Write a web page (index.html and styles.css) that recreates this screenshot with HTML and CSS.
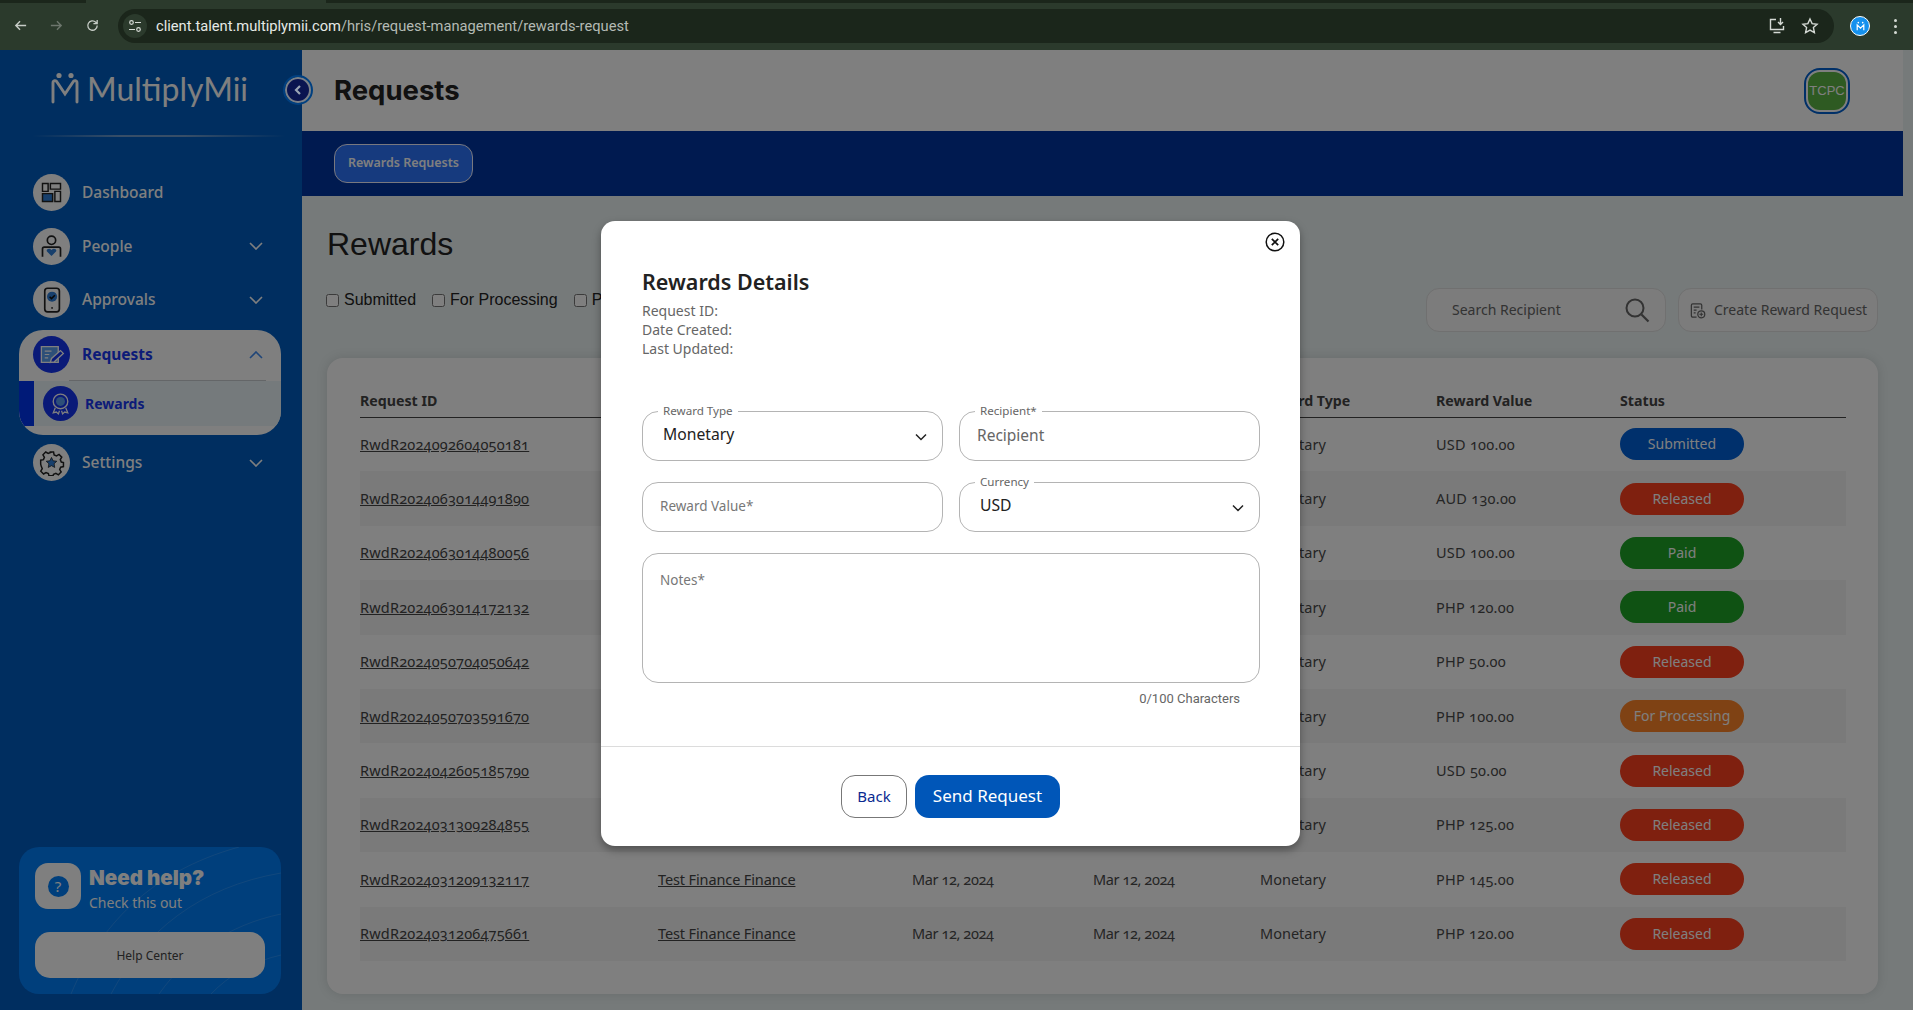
FILE: index.html
```html
<!DOCTYPE html>
<html lang="en">
<head>
<meta charset="utf-8">
<title>Rewards Requests</title>
<link rel="stylesheet" href="styles.css">
</head>
<body>
<div class="browser">
  <div class="tabstrip"><span class="tab-dark tab-a"></span><span class="tab-light"></span><span class="tab-dark tab-b"></span></div>
  <div class="toolbar">
    <svg class="tb-icon" viewBox="0 0 16 16"><path d="M14 8H3M7.500 3.500 3 8l4.500 4.500" fill="none" stroke="#c6ccc6" stroke-width="1.500"/></svg>
    <svg class="tb-icon tb-fwd" viewBox="0 0 16 16"><path d="M2 8h11M8.500 3.500 13 8l-4.500 4.500" fill="none" stroke="#6d766d" stroke-width="1.500"/></svg>
    <svg class="tb-icon tb-reload" viewBox="0 0 16 16"><path d="M13 8a5 5 0 1 1-1.500-3.500L13 6M13 2v4H9" fill="none" stroke="#c6ccc6" stroke-width="1.400"/></svg>
    <div class="omnibox">
      <span class="tune"><svg viewBox="0 0 16 16" width="16" height="16"><circle cx="4.500" cy="4.500" r="1.800" fill="none" stroke="#d5dad5" stroke-width="1.200"/><path d="M8 4.500h6M2 11.500h6" stroke="#d5dad5" stroke-width="1.200"/><circle cx="11.500" cy="11.500" r="1.800" fill="none" stroke="#d5dad5" stroke-width="1.200"/></svg></span>
      <span class="url"><span class="url-host">client.talent.multiplymii.com</span>/hris/request-management/rewards-request</span>
      <svg class="om-install" viewBox="0 0 18 18"><path d="M8 2.500H2.500v10h13V9M5.500 15.500h7" fill="none" stroke="#d5dad5" stroke-width="1.400"/><path d="M12.500 1v6M10 5l2.500 2.500L15 5" fill="none" stroke="#d5dad5" stroke-width="1.400"/></svg>
      <svg class="om-star" viewBox="0 0 18 18"><path d="m9 2 2.100 4.600 5 .6-3.700 3.400 1 5L9 13.100 4.600 15.600l1-5L1.900 7.200l5-.6z" fill="none" stroke="#d5dad5" stroke-width="1.400"/></svg>
    </div>
    <span class="profile"><svg viewBox="0 0 20 20" width="11" height="11"><path d="M4 17V7l6 6 6-6v10" fill="none" stroke="#fff" stroke-width="2.200"/><circle cx="6" cy="3" r="1.500" fill="#fff"/><circle cx="14" cy="3" r="1.500" fill="#fff"/></svg></span>
    <span class="kebab"><i></i><i></i><i></i></span>
  </div>
</div>

<div class="app">
  <aside class="sidebar">
    <div class="logo">
      <svg class="logo-mark" viewBox="0 0 28 36"><circle cx="8" cy="3.500" r="2.600" fill="#fff"/><circle cx="20" cy="3.500" r="2.600" fill="#fff"/><path d="M2 30V11c0-3 3-3 4-1l8 12 8-12c1-2 4-2 4 1v19" fill="none" stroke="#fff" stroke-width="2.900" stroke-linecap="round"/></svg>
      <span class="logo-text">MultiplyMii</span>
    </div>
    <div class="logo-rule"></div>

    <nav class="nav">
      <a class="nav-item">
        <span class="nav-ico"><svg viewBox="0 0 24 24"><path d="M4 4h5v7H4zM11 4h9v5h-9zM15 11h5v9h-5z" fill="none" stroke="#222" stroke-width="1.300"/><path d="M4 13h9v7H4z" fill="#2f7fd8" stroke="#222" stroke-width="1.300"/></svg></span>
        <span class="nav-label">Dashboard</span>
      </a>
      <a class="nav-item">
        <span class="nav-ico"><svg viewBox="0 0 24 24"><circle cx="12" cy="6.500" r="3.700" fill="none" stroke="#222" stroke-width="1.500"/><path d="M4 21v-7c0-1 .6-1.500 1.500-1.500h13c.9 0 1.500.5 1.500 1.500v7" fill="none" stroke="#222" stroke-width="1.500"/><path d="M12 20.500 8 16.500c-1.300-1.700 1.800-3.700 4-1.500 2.200-2.200 5.300-.2 4 1.500z" fill="#2f7fd8"/></svg></span>
        <span class="nav-label">People</span>
        <svg class="chev" viewBox="0 0 14 8"><path d="m1 1 6 6 6-6" fill="none" stroke="#fff" stroke-width="1.600"/></svg>
      </a>
      <a class="nav-item">
        <span class="nav-ico"><svg viewBox="0 0 24 24"><rect x="6" y="2" width="13" height="21" rx="2.500" fill="none" stroke="#222" stroke-width="1.500"/><circle cx="12.500" cy="9.500" r="4.500" fill="#2f7fd8"/><path d="m10.300 9.500 1.700 1.700 3-3" fill="none" stroke="#111" stroke-width="1.400"/><circle cx="12.500" cy="19.500" r=".8" fill="#222"/></svg></span>
        <span class="nav-label">Approvals</span>
        <svg class="chev" viewBox="0 0 14 8"><path d="m1 1 6 6 6-6" fill="none" stroke="#fff" stroke-width="1.600"/></svg>
      </a>
      <div class="nav-group">
        <a class="nav-item nav-item-active">
          <span class="nav-ico nav-ico-active"><svg viewBox="0 0 24 24"><path d="M3 5h15v14H3z" fill="#5a9ff0" stroke="#fff" stroke-width="1.200"/><path d="M6 9h6M6 12h4M6 15h3" stroke="#fff" stroke-width="1.100"/><path d="m11 19 1-3.500 8-7 2.500 2.500-8 7.500z" fill="#1434f0" stroke="#fff" stroke-width="1.200"/></svg></span>
          <span class="nav-label">Requests</span>
          <svg class="chev" viewBox="0 0 14 8"><path d="m1 7 6-6 6 6" fill="none" stroke="#3f8af0" stroke-width="1.600"/></svg>
        </a>
        <a class="nav-sub">
          <span class="nav-sub-ico"><svg viewBox="0 0 24 24"><circle cx="12" cy="10" r="7" fill="none" stroke="#fff" stroke-width="1.300"/><circle cx="12" cy="10" r="4.300" fill="#5a9ff0"/><path d="m7 16-2 5 3-.8 2 1.800 1-3M17 16l2 5-3-.8-2 1.800-1-3" fill="none" stroke="#fff" stroke-width="1.200"/></svg></span>
          <span class="nav-sub-label">Rewards</span>
        </a>
      </div>
      <a class="nav-item">
        <span class="nav-ico"><svg viewBox="0 0 24 24"><path d="m10 2h4l.6 2.800 2.400 1 2.500-1.500 2.800 2.800-1.500 2.500 1 2.400 2.200.6v4l-2.800.6-1 2.400 1.500 2.500-2.800 2.800-2.500-1.500-2.400 1-.6 1.600h-4l-.6-2.400-2.400-1-2.500 1.500-2.800-2.800 1.500-2.500-1-2.400L1 14.200v-4l2.800-.6 1-2.400-1.500-2.500 2.800-2.800 2.500 1.500 2.400-1z" transform="translate(1.500 1) scale(.88)" fill="none" stroke="#222" stroke-width="1.500"/><path d="m12 7.500 1.400 3 3.300.4-2.400 2.200.6 3.300-2.900-1.600-2.900 1.600.6-3.300-2.400-2.200 3.300-.4z" fill="#2f7fd8" stroke="#222" stroke-width=".7"/></svg></span>
        <span class="nav-label">Settings</span>
        <svg class="chev" viewBox="0 0 14 8"><path d="m1 1 6 6 6-6" fill="none" stroke="#fff" stroke-width="1.600"/></svg>
      </a>
    </nav>

    <div class="help">
      <svg class="help-arcs" viewBox="0 0 262 147" preserveAspectRatio="none"><g fill="none" stroke="#fff" stroke-opacity=".14" stroke-width="1"><path d="M52 147C80 80 130 25 220 0"/><path d="M92 147C125 85 180 40 262 26"/><path d="M140 147C170 105 210 78 262 67"/><path d="M192 147C210 128 235 114 262 108"/></g></svg>
      <div class="help-top">
        <span class="help-ico"><span class="help-q">?</span></span>
        <div class="help-copy">
          <div class="help-title">Need help?</div>
          <div class="help-sub">Check this out</div>
        </div>
      </div>
      <button class="help-btn">Help Center</button>
    </div>
  </aside>

  <main class="main">
    <header class="topbar">
      <h1 class="page-title">Requests</h1>
      <span class="avatar"><span class="avatar-inner">TCPC</span></span>
    </header>
    <div class="tabband"><button class="tab-pill">Rewards Requests</button></div>
    <section class="content">
      <h2 class="rewards-title">Rewards</h2>
      <div class="toolrow">
        <div class="filters">
          <label class="filter"><input type="checkbox">Submitted</label>
          <label class="filter"><input type="checkbox">For Processing</label>
          <label class="filter"><input type="checkbox">Paid</label>
        </div>
        <div class="actions">
          <div class="search"><span class="search-text">Search Recipient</span>
            <svg viewBox="0 0 26 26" width="26" height="26"><circle cx="11" cy="11" r="8.500" fill="none" stroke="#666" stroke-width="2"/><path d="m17.500 17.500 7 7" stroke="#666" stroke-width="2.200"/></svg>
          </div>
          <button class="create">
            <svg viewBox="0 0 18 18" width="17" height="17"><path d="M8 16H4a1.500 1.500 0 0 1-1.500-1.500v-11A1.500 1.500 0 0 1 4 2h8a1.500 1.500 0 0 1 1.500 1.500V8M5 5.500h6M5 8.500h3M5 11.500h2" fill="none" stroke="#666" stroke-width="1.300"/><circle cx="13" cy="13" r="3.700" fill="none" stroke="#666" stroke-width="1.300"/><path d="M13 11v4M11 13h4" stroke="#666" stroke-width="1.100"/></svg>
            <span class="search-text">Create Reward Request</span>
          </button>
        </div>
      </div>
      <div class="card">
        <table class="tbl">
          <thead>
            <tr><th class="c1">Request ID</th><th class="c2">Recipient</th><th class="c3">Date Created</th><th class="c4">Last Updated</th><th class="c5">Reward Type</th><th class="c6">Reward Value</th><th class="c7">Status</th></tr>
          </thead>
          <tbody>
            <tr><td><a>RwdR2024092604050181</a></td><td><a>Test Finance Finance</a></td><td>Sep 26, 2024</td><td>Sep 26, 2024</td><td>Monetary</td><td>USD 100.00</td><td><span class="badge b-sub">Submitted</span></td></tr>
            <tr><td><a>RwdR2024063014491890</a></td><td><a>Test Finance Finance</a></td><td>Jun 30, 2024</td><td>Jun 30, 2024</td><td>Monetary</td><td>AUD 130.00</td><td><span class="badge b-rel">Released</span></td></tr>
            <tr><td><a>RwdR2024063014480056</a></td><td><a>Test Finance Finance</a></td><td>Jun 30, 2024</td><td>Jun 30, 2024</td><td>Monetary</td><td>USD 100.00</td><td><span class="badge b-paid">Paid</span></td></tr>
            <tr><td><a>RwdR2024063014172132</a></td><td><a>Test Finance Finance</a></td><td>Jun 30, 2024</td><td>Jun 30, 2024</td><td>Monetary</td><td>PHP 120.00</td><td><span class="badge b-paid">Paid</span></td></tr>
            <tr><td><a>RwdR2024050704050642</a></td><td><a>Test Finance Finance</a></td><td>May 07, 2024</td><td>May 07, 2024</td><td>Monetary</td><td>PHP 50.00</td><td><span class="badge b-rel">Released</span></td></tr>
            <tr><td><a>RwdR2024050703591670</a></td><td><a>Test Finance Finance</a></td><td>May 07, 2024</td><td>May 07, 2024</td><td>Monetary</td><td>PHP 100.00</td><td><span class="badge b-proc">For Processing</span></td></tr>
            <tr><td><a>RwdR2024042605185790</a></td><td><a>Test Finance Finance</a></td><td>Apr 26, 2024</td><td>Apr 26, 2024</td><td>Monetary</td><td>USD 50.00</td><td><span class="badge b-rel">Released</span></td></tr>
            <tr><td><a>RwdR2024031309284855</a></td><td><a>Test Finance Finance</a></td><td>Mar 13, 2024</td><td>Mar 13, 2024</td><td>Monetary</td><td>PHP 125.00</td><td><span class="badge b-rel">Released</span></td></tr>
            <tr><td><a>RwdR2024031209132117</a></td><td><a>Test Finance Finance</a></td><td>Mar 12, 2024</td><td>Mar 12, 2024</td><td>Monetary</td><td>PHP 145.00</td><td><span class="badge b-rel">Released</span></td></tr>
            <tr><td><a>RwdR2024031206475661</a></td><td><a>Test Finance Finance</a></td><td>Mar 12, 2024</td><td>Mar 12, 2024</td><td>Monetary</td><td>PHP 120.00</td><td><span class="badge b-rel">Released</span></td></tr>
          </tbody>
        </table>
      </div>
    </section>
  </main>

  <div class="scrim">
    <button class="collapse"><svg viewBox="0 0 12 12" width="12" height="12"><path d="M8 2 4 6l4 4" fill="none" stroke="#9aa4b4" stroke-width="2.200"/></svg></button>
    <div class="modal">
      <button class="modal-close"><svg viewBox="0 0 20 20" width="20" height="20"><circle cx="10" cy="10" r="8.800" fill="none" stroke="#111" stroke-width="1.500"/><path d="m6.800 6.800 6.400 6.400M13.200 6.800l-6.400 6.400" stroke="#111" stroke-width="1.700"/></svg></button>
      <div class="modal-body">
        <h3 class="modal-title">Rewards Details</h3>
        <div class="meta">
          <div>Request ID:</div>
          <div>Date Created:</div>
          <div>Last Updated:</div>
        </div>
        <div class="fields">
          <div class="field"><span class="float">Reward Type</span><span class="value">Monetary</span>
            <svg class="fchev" viewBox="0 0 12 8"><path d="m1 1.500 5 5 5-5" fill="none" stroke="#222" stroke-width="1.500"/></svg></div>
          <div class="field"><span class="float">Recipient*</span><span class="ph">Recipient</span></div>
          <div class="field"><span class="ph-sm">Reward Value*</span></div>
          <div class="field"><span class="float">Currency</span><span class="value">USD</span>
            <svg class="fchev" viewBox="0 0 12 8"><path d="m1 1.500 5 5 5-5" fill="none" stroke="#222" stroke-width="1.500"/></svg></div>
        </div>
        <div class="notes"><span class="ph-sm">Notes*</span></div>
        <div class="counter">0/100 Characters</div>
      </div>
      <div class="modal-foot">
        <button class="btn-back">Back</button>
        <button class="btn-send">Send Request</button>
      </div>
    </div>
  </div>
</div>
</body>
</html>
```
FILE: styles.css
```css
* { box-sizing: border-box; }
html, body { margin: 0; height: 1010px; overflow: hidden; }
body { font-family: "Noto Sans", sans-serif; background: #ecf4f4; color: #222; }
button { font-family: inherit; cursor: pointer; }

/* browser chrome */
.browser { height: 50px; background: #2b3a2c; }
.tabstrip { display: flex; height: 3px; }
.tab-dark { background: #1b261b; }
.tab-a { width: 86px; }
.tab-light { width: 240px; background: #2b3a2c; }
.tab-b { flex: 1; }
.toolbar { height: 47px; display: flex; align-items: flex-start; padding: 6px 0 0 13px; }
.tb-icon { width: 15px; height: 15px; margin-top: 9px; flex: none; }
.tb-fwd { margin-left: 21px; }
.tb-reload { margin-left: 21px; }
.omnibox { margin-left: 18px; width: 1716px; height: 34px; border-radius: 17px; background: #1b261b; display: flex; align-items: center; padding: 0 15px 0 5px; }
.tune { width: 24px; height: 24px; border-radius: 50%; background: #2b3a2c; display: flex; align-items: center; justify-content: center; flex: none; }
.url { margin-left: 9px; flex: 1; font: 14.700px "Roboto", sans-serif; color: #b4bab4; white-space: nowrap; }
.url-host { color: #e6eae6; }
.om-install { width: 18px; height: 18px; margin-right: 15px; }
.om-star { width: 18px; height: 18px; }
.profile { margin: 7px 0 0 16px; width: 20px; height: 20px; border-radius: 50%; background: #1591ee; border: 1.500px solid #fff; display: flex; align-items: center; justify-content: center; flex: none; }
.kebab { margin: 10px 0 0 24px; display: flex; flex-direction: column; gap: 3px; }
.kebab i { width: 3px; height: 3px; border-radius: 50%; background: #d5dad5; display: block; }

/* layout */
.app { position: relative; display: flex; height: 960px; }
.sidebar { width: 302px; flex: none; background: #005cc0; display: flex; flex-direction: column; padding: 0 21px 16px 19px; }
.main { flex: 1; min-width: 0; display: flex; flex-direction: column; }

/* logo + nav */
.logo { display: flex; align-items: center; gap: 8px; margin: 21px 0 0 32px; height: 37px; }
.logo-mark { width: 28px; height: 36px; flex: none; }
.logo-text { font: 400 32px "Lato", sans-serif; color: #fff; line-height: 37px; margin-top: -2px; }
.logo-rule { height: 2px; margin: 27px -5px 0 13px; background: linear-gradient(90deg, transparent, #6f9dd0 35%, #6f9dd0 60%, transparent); }
.nav { margin-top: 37px; display: flex; flex-direction: column; gap: 16.500px; flex: 1; }
.nav-item { height: 37px; display: flex; align-items: center; padding-left: 14px; color: #fff; }
.nav-ico { width: 37px; height: 37px; border-radius: 50%; background: #fff; display: flex; align-items: center; justify-content: center; flex: none; }
.nav-ico svg { width: 27px; height: 27px; }
.nav-ico-active { background: #1434f0; }
.nav-label { margin: -1px 0 0 12px; font-size: 15.500px; font-weight: 500; flex: 1; }
.chev { width: 14px; height: 8px; margin-right: 18px; flex: none; }
.nav-group { margin: -5px 0 -7px; background: #fff; border-radius: 24px; height: 105px; overflow: hidden; display: flex; flex-direction: column; padding-top: 6px; flex: none; }
.nav-item-active { color: #1838f0; flex: none; height: 38px; }
.nav-item-active .nav-label { font-weight: 700; }
.nav-sub { position: relative; margin-top: 7px; height: 45px; background: #eaf4f8; border-left: 15px solid #0034f0; display: flex; align-items: center; padding-left: 9px; color: #1838f0; }
.nav-sub::before { content: ""; position: absolute; top: -1px; left: 35px; width: 197px; height: 1px; background: #c8ccd0; }
.nav-sub-ico { width: 35px; height: 35px; border-radius: 50%; background: #1434f0; display: flex; align-items: center; justify-content: center; flex: none; }
.nav-sub-ico svg { width: 25px; height: 25px; }
.nav-sub-label { margin-left: 7px; font-size: 14px; font-weight: 700; }

/* help */
.help { position: relative; height: 147px; border-radius: 20px; background: #007ef8; padding: 16px; overflow: hidden; flex: none; }
.help-arcs { position: absolute; inset: 0; width: 100%; height: 100%; }
.help-top { position: relative; display: flex; gap: 8px; height: 46px; }
.help-ico { width: 46px; height: 46px; border-radius: 13px; background: #fff; display: flex; align-items: center; justify-content: center; flex: none; }
.help-q { width: 21px; height: 21px; border-radius: 50%; background: #007ef8; color: #fff; font-size: 15px; line-height: 21px; text-align: center; }
.help-title { font: 900 20.500px/26px "Inter", sans-serif; color: #fff; margin-top: 2px; }
.help-sub { font-size: 14px; line-height: 22px; color: #fff; margin-top: 1px; }
.help-btn { position: relative; display: block; width: 230px; height: 46px; margin-top: 23px; border: 0; border-radius: 15px; background: #fff; color: #444; font-size: 12px; }

/* main header */
.topbar { height: 81px; margin-right: 10px; background: #fff; display: flex; align-items: center; justify-content: space-between; padding: 0 53px 0 32px; flex: none; }
.page-title { margin: -2px 0 0; font: 700 27.500px "Inter", sans-serif; color: #222; }
.avatar { width: 46px; height: 46px; border-radius: 16px; border: 2px solid #0060d0; background: #fff; padding: 2px; display: block; }
.avatar-inner { display: flex; width: 100%; height: 100%; border-radius: 12px; background: #5cb444; color: #fff; font: 13px "Liberation Sans", sans-serif; align-items: center; justify-content: center; }
.tabband { height: 65px; margin-right: 10px; background: #0034a0; padding: 13px 32px; flex: none; }
.tab-pill { width: 139px; height: 39px; border-radius: 13px; border: 1px solid #f0f0ff; background: #2c74fc; color: #fff; font-size: 12.500px; font-weight: 600; padding: 0 0 2px; display: block; }

/* content */
.content { flex: 1; padding: 0 35px 0 25px; background: #ecf4f4; }
.rewards-title { margin: 30px 0 0; font: 400 32px/37px "Liberation Sans", sans-serif; color: #222; }
.toolrow { display: flex; justify-content: space-between; align-items: flex-start; margin-top: 25px; height: 44px; }
.filters { display: flex; gap: 16px; margin: 2px 0 0 -1px; }
.filter { display: flex; align-items: center; font: 16px/20px "Liberation Sans", sans-serif; color: #222; }
.filter input { width: 13px; height: 13px; margin: 0 5px 0 0; flex: none; }
.actions { display: flex; gap: 12px; }
.search { width: 240px; height: 44px; border: 1px solid #e0e0e0; border-radius: 13px; background: #f8f8f8; display: flex; align-items: center; justify-content: space-between; padding: 0 15px 0 25px; font-size: 14px; color: #666; }
.search-text { margin-top: -2px; }
.create { width: 200px; height: 44px; border: 1px solid #e0e0e0; border-radius: 13px; background: #f8f8f8; color: #666; font-size: 14px; display: flex; align-items: center; gap: 8px; padding: 0 0 0 10px; white-space: nowrap; }

/* table card */
.card { margin-top: 26px; height: 636px; background: #fff; border-radius: 16px; box-shadow: 0 0 12px rgba(0,0,0,.12); padding: 25px 32px 0 33px; }
.tbl { width: 1486px; border-collapse: collapse; table-layout: fixed; font: 14.500px "Noto Sans", sans-serif; font-variant-numeric: oldstyle-nums; color: #4a4a4a; }
.tbl th { height: 34px; padding: 2px 0 0; text-align: left; font: 700 14.200px "Noto Sans", sans-serif; color: #444; border-bottom: 1.500px solid #444; vertical-align: middle; }
.tbl td { height: 54.400px; padding: 0 0 1px; vertical-align: middle; }
.tbl td:nth-child(1) { letter-spacing: .2px; }
.tbl td:nth-child(2) { letter-spacing: -.12px; }
.tbl td:nth-child(3), .tbl td:nth-child(4) { letter-spacing: -.4px; }
.tbl td:nth-child(6) { letter-spacing: .25px; }
.tbl tbody tr:nth-child(even) { background: #f4f4f4; }
.tbl a { text-decoration: underline; color: #444; }
.c1 { width: 298px; } .c2 { width: 254px; } .c3 { width: 181px; } .c4 { width: 167px; } .c5 { width: 176px; } .c6 { width: 184px; } .c7 { width: 226px; }
.badge { display: block; width: 124px; height: 32px; margin-top: 1px; border-radius: 16px; text-align: center; font: 14px/31px "Noto Sans", sans-serif; color: #fff; }
.b-sub { background: #0060d8; }
.b-rel { background: #ff401e; }
.b-paid { background: #1ea526; }
.b-proc { background: #ff8428; }

/* overlay + modal */
.scrim { position: absolute; inset: 0; background: rgba(0,0,0,.5); padding: 171px 0 0 601px; }
.collapse { position: absolute; left: 285px; top: 27px; width: 26px; height: 26px; border-radius: 50%; padding: 0; border: 2px solid #7a8088; outline: 2px solid #004080; outline-offset: 0; background: #0a1450; display: flex; align-items: center; justify-content: center; }
.modal { position: relative; width: 699px; height: 625px; background: #fff; border-radius: 14px; box-shadow: 0 4px 8px rgba(0,0,0,.35); display: flex; flex-direction: column; }
.modal-close { position: absolute; top: 11px; right: 15px; width: 20px; height: 20px; padding: 0; border: 0; background: none; display: block; }
.modal-body { flex: 1; padding: 47px 41px 0; }
.modal-title { margin: 0; font: 600 21.500px/27px "Noto Sans", sans-serif; color: #222; }
.meta { margin-top: 6px; font-size: 14px; line-height: 19px; color: #666; }
.fields { margin-top: 53px; display: grid; grid-template-columns: 301px 301px; column-gap: 16px; row-gap: 21px; }
.field { position: relative; height: 50px; border: 1px solid #b4b4b4; border-radius: 16px; display: flex; align-items: center; padding: 0 20px; }
.float { position: absolute; top: -9px; left: 15px; padding: 0 5px; background: #fff; font-size: 11.600px; line-height: 16px; color: #666; white-space: nowrap; }
.value { font-size: 15.700px; color: #222; margin-top: -5px; }
.ph { font-size: 15.500px; color: #666; margin: -3px 0 0 -3px; }
.ph-sm { font-size: 13.500px; color: #777; margin-left: -3px; position: relative; top: -1px; }
.fchev { position: absolute; right: 15px; top: 21px; width: 12px; height: 8px; }
.notes { margin-top: 21px; height: 130px; width: 618px; border: 1px solid #b4b4b4; border-radius: 16px; padding: 16px 20px; line-height: 20px; }
.counter { margin-top: 7px; width: 598px; text-align: right; font: 13px/17px "Roboto", sans-serif; color: #666; }
.modal-foot { height: 100px; border-top: 1px solid #dcdcdc; display: flex; justify-content: center; align-items: flex-start; gap: 8px; padding-top: 28px; flex: none; }
.btn-back { width: 66px; height: 43px; border: 1px solid #777; border-radius: 14px; background: #fff; color: #0a2a90; font-size: 15px; padding: 0 0 2px; }
.btn-send { width: 145px; height: 43px; border: 0; border-radius: 14px; background: #0056b8; color: #fff; font-size: 17px; font-weight: 400; padding: 0 0 3px; }
```
